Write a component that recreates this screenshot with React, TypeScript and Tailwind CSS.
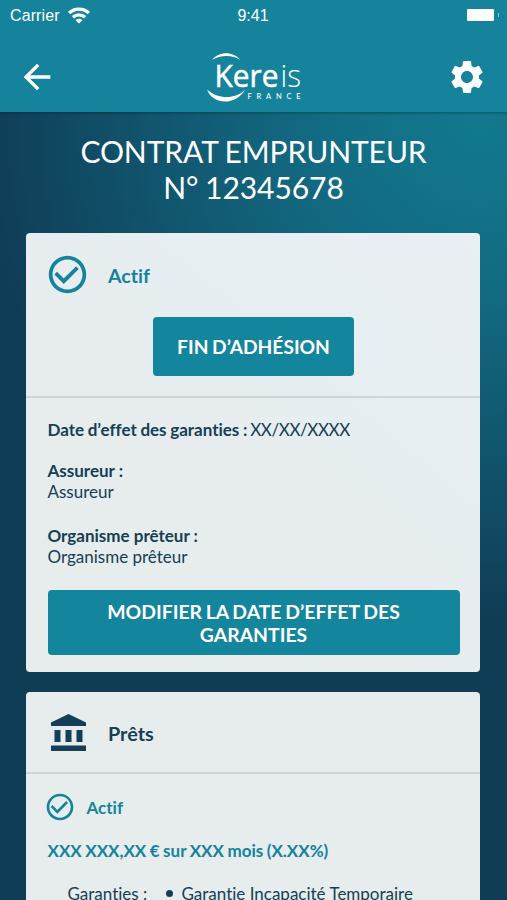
import type { ReactNode } from "react";
import { MdArrowBack, MdCheckCircleOutline, MdSettings } from "react-icons/md";

function StatusBar() {
  return (
    <div className="grid h-[30px] grid-cols-3 items-center pl-[10px] pr-[8px] font-['Liberation_Sans',sans-serif] text-[16px] leading-[30px]">
      <div className="flex items-center gap-[8px]">
        <span className="tracking-[0.1px]">Carrier</span>
        <svg width="22" height="17" viewBox="0 0 22 17" fill="none" stroke="currentColor" strokeWidth="3.4">
          <path d="M1.1 6.1a14.2 14.2 0 0 1 19.8 0" />
          <path d="M4.9 10.3a8.8 8.8 0 0 1 12.2 0" />
          <path d="M11 16.6 7.5 13.3a5 5 0 0 1 7 0z" fill="currentColor" stroke="none" />
        </svg>
      </div>
      <span className="pt-px pr-[3px] text-center">9:41</span>
      <div className="flex items-center justify-end gap-[4px] pb-[2px]">
        <span className="h-[12px] w-[27px] rounded-[1px] bg-white" />
        <span className="h-[4px] w-[1px] bg-white/50" />
      </div>
    </div>
  );
}

function Logo() {
  return (
    <svg width="100" height="54" viewBox="202.5 50 100 54" fill="white">
      <path d="M212.5 60C219 51.5 233 50.5 241 60C233 54.5 221 54.5 212.5 60z" />
      <path d="M207.5 89.5C213 105 236 106 245.5 90C236 99 219 100 207.5 89.5z" />
      <text x="215" y="86.7" fontFamily="Open Sans, sans-serif" fontSize="31.5" stroke="white" strokeWidth="0.5" textLength="64" lengthAdjust="spacingAndGlyphs">
        Kere
      </text>
      <text x="281" y="86.7" fontFamily="Open Sans, sans-serif" fontSize="31" fontWeight="300" textLength="20.5" lengthAdjust="spacingAndGlyphs">
        is
      </text>
      <text x="248" y="98.7" fontFamily="Lato, sans-serif" fontSize="7.5" fontWeight="500" textLength="53">
        FRANCE
      </text>
    </svg>
  );
}

function BankIcon() {
  return (
    <svg width="35" height="37" viewBox="0 0 35 37" fill="currentColor">
      <path d="M17.5 0 0 8.5V12h35V8.5z" />
      <path d="M3.5 16h6v12h-6zM14.5 16h6v12h-6zM25.5 16h6v12h-6z" />
      <path d="M0 31.5h35V37H0z" />
    </svg>
  );
}

function Card({ className, children }: { className: string; children: ReactNode }) {
  return (
    <section className={`ml-[26px] w-[454px] shrink-0 rounded-[4px] text-[#143f57] ${className}`}>
      {children}
    </section>
  );
}

export default function App() {
  return (
    <div className="flex h-[900px] w-[507px] flex-col overflow-hidden bg-[#103d56] bg-[radial-gradient(circle_500px_at_480px_120px,#12798e_0%,#126d84_30%,#11566f_64%,#103d56_100%)] font-[Lato,sans-serif] text-white [font-variant-ligatures:none]">
      <header className="h-[112px] shrink-0 bg-[#15839c] shadow-[0_1px_3px_rgba(0,0,0,0.3)]">
        <StatusBar />
        <div className="flex h-[94px] items-center justify-between pl-[17px] pr-[20px]">
          <MdArrowBack size={40} />
          <Logo />
          <MdSettings size={40} />
        </div>
      </header>

      <h1 className="mt-[21px] h-[100px] shrink-0 text-center text-[30px] leading-[36px] tracking-[-0.07px] [word-spacing:-1px]">
        CONTRAT EMPRUNTEUR
        <br />
        N° 12345678
      </h1>

      <Card className="h-[439px] bg-[linear-gradient(220deg,#e9eff3_0%,#e7eef1_35%,#e7ecec_70%)]">
        <div className="h-[165px] border-b-2 border-[#ced5d8] pt-[19px]">
          <div className="flex items-center gap-[18px] pl-[19px] text-[#15839c]">
            <MdCheckCircleOutline size={45} />
            <span className="pt-[2px] text-[19.5px] font-bold">Actif</span>
          </div>
          <button className="mt-[20px] ml-[127px] block h-[59px] w-[201px] rounded-[4px] bg-[#13859c] pt-[2px] text-[19.2px] font-bold text-white [word-spacing:-1px]">
            FIN D’ADHÉSION
          </button>
        </div>
        <div className="px-[21.5px] pt-[21px] text-[17px] leading-[21px]">
          <p className="[word-spacing:-0.5px]">
            <strong>Date d’effet des garanties :</strong>{" "}
            <span className="-ml-px tracking-[-0.4px]">XX/XX/XXXX</span>
          </p>
          <p className="mt-[20px]">
            <strong>Assureur :</strong>
            <br />
            Assureur
          </p>
          <p className="mt-[23px]">
            <strong>Organisme prêteur :</strong>
            <br />
            Organisme prêteur
          </p>
          <button className="mt-[23px] h-[65px] w-[412px] rounded-[4px] bg-[#13859c] px-[40px] text-[19.4px] leading-[23px] font-bold text-white [word-spacing:-1px]">
            MODIFIER LA DATE D’EFFET DES GARANTIES
          </button>
        </div>
      </Card>

      <Card className="mt-[20px] h-[240px] bg-[#e7ecec]">
        <div className="flex h-[82px] items-center gap-[22px] border-b-2 border-[#ced5d8] pl-[25px]">
          <BankIcon />
          <span className="pt-[3px] text-[19.8px] font-bold">Prêts</span>
        </div>
        <div className="pl-[21.5px] text-[17px] leading-[21px]">
          <div className="mt-[17px] -ml-[4px] flex items-center gap-[11px] text-[#15839c]">
            <MdCheckCircleOutline size={32} />
            <span className="font-bold">Actif</span>
          </div>
          <p className="mt-[17px] font-bold text-[#15839c] [word-spacing:-0.6px]">
            XXX XXX,XX € sur XXX mois (X.XX%)
          </p>
          <div className="mt-[22px] flex items-center pl-[20px]">
            <span className="w-[98px]">Garanties :</span>
            <span className="mr-[9px] size-[7px] rounded-full bg-[#143f57]" />
            <span>Garantie Incapacité Temporaire</span>
          </div>
        </div>
      </Card>
    </div>
  );
}
